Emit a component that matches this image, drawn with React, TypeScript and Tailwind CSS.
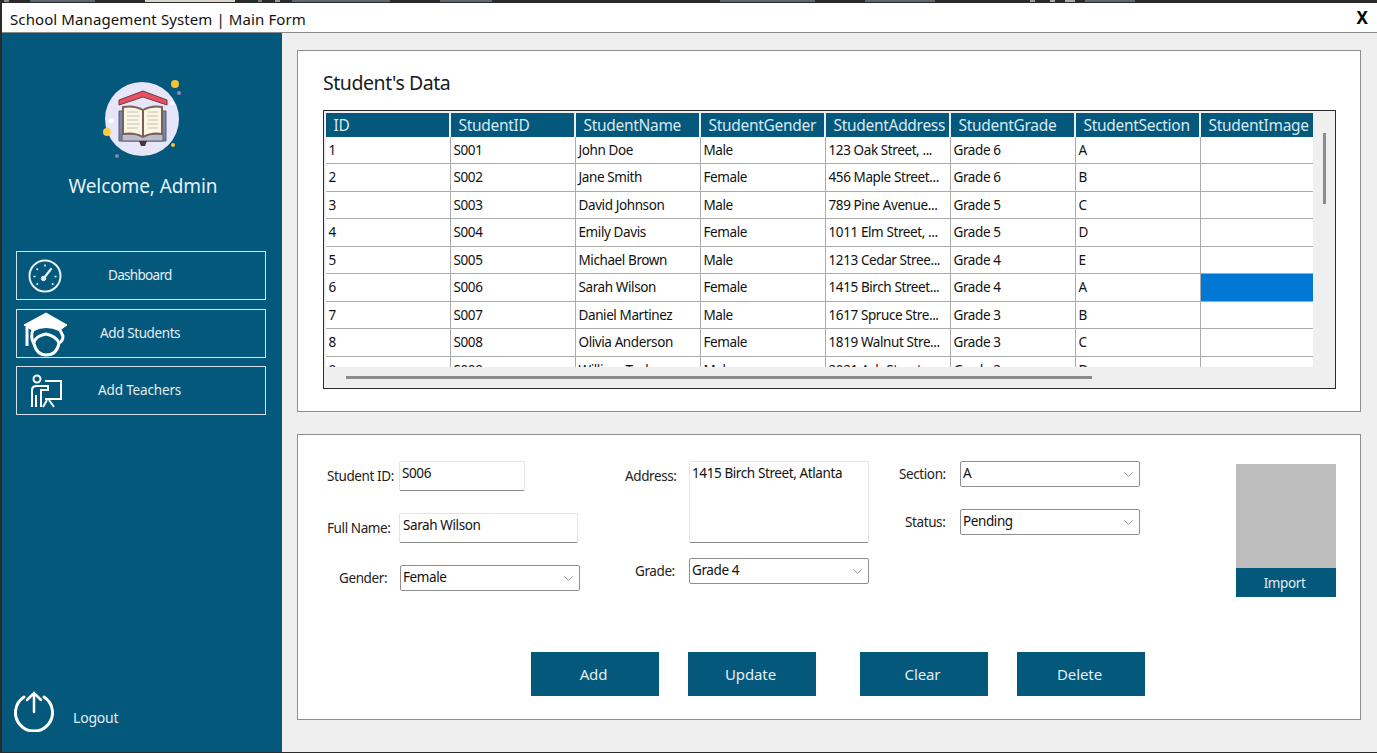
import type { ReactNode } from "react";
import { ChevronDown } from "lucide-react";

const rows = [
  ["1", "S001", "John Doe", "Male", "123 Oak Street, ...", "Grade 6", "A"],
  ["2", "S002", "Jane Smith", "Female", "456 Maple Street...", "Grade 6", "B"],
  ["3", "S003", "David Johnson", "Male", "789 Pine Avenue...", "Grade 5", "C"],
  ["4", "S004", "Emily Davis", "Female", "1011 Elm Street, ...", "Grade 5", "D"],
  ["5", "S005", "Michael Brown", "Male", "1213 Cedar Stree...", "Grade 4", "E"],
  ["6", "S006", "Sarah Wilson", "Female", "1415 Birch Street...", "Grade 4", "A"],
  ["7", "S007", "Daniel Martinez", "Male", "1617 Spruce Stre...", "Grade 3", "B"],
  ["8", "S008", "Olivia Anderson", "Female", "1819 Walnut Stre...", "Grade 3", "C"],
  ["9", "S009", "William Taylor", "Male", "2021 Ash Street...", "Grade 2", "D"],
];

const columns = ["ID", "StudentID", "StudentName", "StudentGender", "StudentAddress", "StudentGrade", "StudentSection", "StudentImage"];

// slivers of the desktop behind the window, cut off at the top edge: [gap before, width, colour]
const slivers: [number, number, string][] = [
  [4, 5, "#888888"], [21, 65, "#5d6873"], [50, 90, "#d8d5cc"], [23, 4, "#777777"], [13, 5, "#999999"],
  [12, 98, "#5d6873"], [50, 52, "#5d6873"], [228, 95, "#5d6873"], [50, 70, "#5d6873"], [95, 5, "#999999"],
  [15, 5, "#aaaaaa"], [10, 10, "#aaaaaa"], [10, 50, "#5d6873"],
];

function SchoolLogo() {
  return (
    <svg width="90" height="90" viewBox="0 0 90 90">
      <circle cx="45" cy="45" r="37" fill="#e6e6f8" />
      <circle cx="78" cy="10" r="4" fill="#f7c32e" />
      <circle cx="82" cy="19" r="2" fill="#9288bd" />
      <circle cx="10" cy="58" r="4" fill="#fbcb45" />
      <circle cx="76" cy="71" r="2" fill="#f7c32e" />
      <circle cx="20" cy="82" r="2" fill="#8c82b8" />
      <circle cx="14" cy="47" r="2.5" fill="#ffffff" />
      <circle cx="75" cy="29" r="2" fill="#ffffff" />
      <path d="M22 26 L46 17 L70 26 L70 31 L46 23 L22 31 Z" fill="#e8505f" stroke="#6b3b45" strokeWidth="1" />
      <path d="M22 37 H69 V67 H22 Z" fill="#6f86b4" stroke="#5c5a70" strokeWidth="1" />
      <path d="M25 60 H66 V67 H25 Z" fill="#bdbccb" stroke="#5c5a70" strokeWidth="1" />
      <path d="M26 33 Q37 31 46 36 Q55 31 65 33 V60 Q55 58 46 63 Q37 58 26 60 Z" fill="#fbf5e6" stroke="#7b6058" strokeWidth="2" />
      <path d="M46 36 V63" stroke="#7b6058" strokeWidth="2" />
      <path d="M30 38 H41 M30 42 H42 M30 46 H41 M30 50 H42 M30 54 H41 M51 38 H61 M50 42 H61 M51 46 H61 M50 50 H61 M51 54 H61" stroke="#c9c2ae" strokeWidth="1.2" />
      <path d="M42 67 H50 L48 72 H44 Z" fill="#4a3238" />
    </svg>
  );
}

function GaugeIcon() {
  return (
    <svg width="36" height="36" viewBox="0 0 36 36" fill="none" stroke="#e8f1f5">
      <circle cx="18" cy="18" r="15.5" strokeWidth="2" />
      <path d="M17 20 L24 11" strokeWidth="2.2" strokeLinecap="round" />
      <circle cx="16.5" cy="20.5" r="2.2" fill="#e8f1f5" />
      <path d="M18 6.5 V8.5 M9.5 10.5 L11 12 M6.5 18.5 H8.5 M29.5 18.5 H27.5 M9.5 26.5 L11 25.5 M26.5 26.5 L25 25.5" strokeWidth="1.6" />
    </svg>
  );
}

function GraduateIcon() {
  return (
    <svg width="46" height="47" viewBox="0 0 46 47" fill="none" stroke="#ffffff">
      <path d="M1 15 L23 3 L44 15 L37 20 Q23 13 9 20 Z" fill="#ffffff" strokeWidth="1" />
      <path d="M10 20 Q23 13 37 20 L40 26 Q40 31 36 33 Q34 45 23 45 Q14 45 11 34 Q7 27 10 20 Z" strokeWidth="3" />
      <path d="M11 33 Q12 26 23 24 Q33 26 36 33" strokeWidth="3" />
      <path d="M4 17 V36" strokeWidth="3" />
    </svg>
  );
}

function TeacherIcon() {
  return (
    <svg width="34" height="36" viewBox="0 0 34 36" fill="none" stroke="#ffffff" strokeWidth="2">
      <circle cx="8" cy="6" r="3.5" />
      <path d="M16 8 H32 V26 H16" />
      <path d="M3 28 V17 Q3 13 8 13 H19 V17 H12 V34 M7 22 V34 M3 34 V28" />
      <path d="M18 27 L14 34 M20 27 L25 34" />
    </svg>
  );
}

function LogoutIcon() {
  return (
    <svg width="42" height="42" viewBox="0 0 42 42" fill="none" stroke="#ffffff" strokeWidth="3" strokeLinecap="round">
      <path d="M11 7 A18.5 18.5 0 1 0 31 7" />
      <path d="M21 22 V3 M14 10 L21 3 L28 10" strokeWidth="2.5" />
    </svg>
  );
}

function NavButton({ icon, label, iconBox, textClass }: { icon: ReactNode; label: string; iconBox: string; textClass: string }) {
  return (
    <div className="flex items-center h-[49px] w-[250px] border-[1.5px] border-[#d5e3ea] text-[13.5px] tracking-[-0.4px] text-[#e4eef2]">
      <div className={iconBox}>{icon}</div>
      <span className={textClass}>{label}</span>
    </div>
  );
}

function ComboBox({ value, className }: { value: string; className: string }) {
  return (
    <div className={"flex items-center justify-between h-[26px] pl-[2px] pr-[3px] pb-[2px] bg-white border border-[#8f8f8f] rounded-[2px] text-[13.5px] tracking-[-0.4px] text-[#111] " + className}>
      <span>{value}</span>
      <ChevronDown className="w-[15px] h-[15px] mt-[2px] text-[#666]" strokeWidth={1.2} />
    </div>
  );
}

function FormLabel({ text, className }: { text: string; className: string }) {
  return <span className={"text-[13.5px] tracking-[-0.4px] text-[#222] whitespace-nowrap " + className}>{text}</span>;
}

export default function App() {
  return (
    <div className="h-[753px] w-[1377px] overflow-hidden bg-[#2a2a2a] pl-[2px] pb-px flex flex-col" style={{ fontFamily: '"Noto Sans", "Open Sans", Arial, sans-serif' }}>
      <div className="h-[3px] shrink-0 flex -ml-[2px]">
        {slivers.map(([gap, width, color], i) => (
          <div key={i} className="h-[2px]" style={{ marginLeft: gap, width, backgroundColor: color }} />
        ))}
      </div>

      {/* title bar */}
      <div className="h-[30px] shrink-0 bg-white border-b border-[#8a8a8a] flex items-center justify-between pl-2 pr-[9px] pt-[4px] text-[15px] tracking-[0.1px] text-[#111]">
        <span>School Management System | Main Form</span>
        <span className="font-bold text-[17px] -mt-[3px] text-black">X</span>
      </div>

      <div className="flex flex-1 min-h-0">
        {/* sidebar */}
        <div className="w-[280px] shrink-0 bg-[#03587c] flex flex-col items-center">
          <div className="mt-[41px]">
            <SchoolLogo />
          </div>
          <div className="mt-[9px] ml-[2px] text-[19px] tracking-[-0.1px] leading-[26px] text-[#e3f1f6]">Welcome, Admin</div>
          <div className="mt-[52px] -ml-[2px] flex flex-col gap-[8.5px]">
            <NavButton icon={<GaugeIcon />} label="Dashboard" iconBox="ml-[10px] w-[40px]" textClass="ml-[41px] tracking-[-0.7px]" />
            <NavButton icon={<GraduateIcon />} label="Add Students" iconBox="ml-[6px] w-[50px]" textClass="ml-[27px]" />
            <NavButton icon={<TeacherIcon />} label="Add Teachers" iconBox="ml-[12px] w-[40px]" textClass="ml-[29px] tracking-[-0.15px]" />
          </div>
          <div className="mt-auto mb-[20px] self-start ml-[11px] flex items-end text-[14px] tracking-[-0.2px] text-[#e4eef2]">
            <LogoutIcon />
            <span className="ml-[18px] mb-[4px]">Logout</span>
          </div>
        </div>

        {/* main */}
        <div className="flex-1 bg-[#efefef] pl-[15px] pr-[16px] pt-[17px] flex flex-col gap-[22px]">
          {/* grid panel */}
          <div className="h-[362px] bg-white border-[1.5px] border-[#8e8e8e] pl-[25px] pr-[24px] pt-[18px]">
            <div className="text-[19.5px] tracking-[-0.45px] leading-[27px] text-[#1a1a1a]">Student's Data</div>
            <div className="mt-[14px] h-[279px] border-[1.5px] border-[#2b2b2b] bg-[#efefef] pl-[1.5px] pt-[1.5px] flex flex-col overflow-hidden">
              <div className="flex h-[254px] gap-[10px] shrink-0">
                <div className="w-[987px] h-[254px] bg-white overflow-hidden shrink-0">
                  <div className="flex h-[24px] bg-[#03587c] text-[15.5px] tracking-[-0.3px] leading-[24px] text-[#d8e9f0]">
                    {columns.map((c, i) => (
                      <div key={c} className={(i === 7 ? "w-[112px] " : "w-[125px] border-r-2 border-[#e8f0f4] ") + "pl-[8px] overflow-hidden whitespace-nowrap"}>
                        {c}
                      </div>
                    ))}
                  </div>
                  {rows.map((r, ri) => (
                    <div key={r[0]} className="flex h-[27.5px] border-b border-[#ababab] text-[13.5px] leading-[27px] text-[#111]">
                      {r.map((cell, ci) => (
                        <div key={ci} className="w-[125px] pl-[3px] border-r border-[#ababab] overflow-hidden whitespace-nowrap tracking-[-0.4px]">
                          {cell}
                        </div>
                      ))}
                      <div className={ri === 5 ? "w-[112px] bg-[#0078d7]" : "w-[112px]"} />
                    </div>
                  ))}
                </div>
                <div className="w-[3px] h-[71px] mt-[20px] bg-[#8c8c8c]" />
              </div>
              <div className="w-[746px] h-[3px] ml-[20px] mt-[9px] bg-[#8c8c8c]" />
            </div>
          </div>

          {/* form panel */}
          <div className="h-[286px] bg-white border-[1.5px] border-[#8e8e8e] flex flex-col">
            <div className="flex h-[217px] pt-[26px] pl-[29px]">
              {/* column 1 */}
              <div className="w-[298px] flex flex-col">
                <div className="flex items-start h-[52px]">
                  <FormLabel text="Student ID:" className="mt-[5px] w-[72px]" />
                  <div className="w-[126px] h-[30px] bg-white border border-[#e4e4e4] border-b-[#888] rounded-[2px] pl-[2px] text-[13.5px] tracking-[-0.4px] leading-[22px] text-[#111]">S006</div>
                </div>
                <div className="flex items-start h-[52px]">
                  <FormLabel text="Full Name:" className="mt-[5px] w-[72px]" />
                  <div className="w-[179px] h-[30px] bg-white border border-[#e4e4e4] border-b-[#888] rounded-[2px] pl-[3px] text-[13.5px] tracking-[-0.4px] leading-[22px] text-[#111]">Sarah Wilson</div>
                </div>
                <div className="flex items-center h-[26px]">
                  <FormLabel text="Gender:" className="ml-[12px] w-[61px]" />
                  <ComboBox value="Female" className="w-[180px]" />
                </div>
              </div>
              {/* column 2 */}
              <div className="w-[274px] flex flex-col">
                <div className="flex items-start h-[97px]">
                  <FormLabel text="Address:" className="mt-[5px] w-[64px]" />
                  <div className="w-[180px] h-[82px] bg-white border border-[#e4e4e4] border-b-[#888] rounded-[2px] pl-[2px] text-[13.5px] tracking-[-0.4px] leading-[22px] text-[#111]">1415 Birch Street, Atlanta</div>
                </div>
                <div className="flex items-center h-[26px]">
                  <FormLabel text="Grade:" className="ml-[10px] w-[54px]" />
                  <ComboBox value="Grade 4" className="w-[180px]" />
                </div>
              </div>
              {/* column 3 */}
              <div className="w-[337px] flex flex-col gap-[22px]">
                <div className="flex items-center h-[26px]">
                  <FormLabel text="Section:" className="w-[61px]" />
                  <ComboBox value="A" className="w-[180px]" />
                </div>
                <div className="flex items-center h-[26px]">
                  <FormLabel text="Status:" className="ml-[6px] w-[55px]" />
                  <ComboBox value="Pending" className="w-[180px]" />
                </div>
              </div>
              {/* image */}
              <div className="w-[100px] h-[133px] mt-[3px] bg-[#bdbdbd] flex flex-col justify-end">
                <div className="h-[29px] bg-[#03587c] text-[13.5px] tracking-[-0.4px] leading-[30px] text-center text-[#e4eef2] pr-[3px]">Import</div>
              </div>
            </div>
            <div className="flex pl-[233px] text-[15px] tracking-[-0.1px] text-[#e4eef2]">
              <div className="w-[128px] h-[44px] bg-[#03587c] flex items-center justify-center pr-[3px]">Add</div>
              <div className="ml-[29px] w-[128px] h-[44px] bg-[#03587c] flex items-center justify-center pr-[3px]">Update</div>
              <div className="ml-[44px] w-[128px] h-[44px] bg-[#03587c] flex items-center justify-center pr-[3px]">Clear</div>
              <div className="ml-[29px] w-[128px] h-[44px] bg-[#03587c] flex items-center justify-center pr-[3px]">Delete</div>
            </div>
          </div>
        </div>
      </div>
    </div>
  );
}
